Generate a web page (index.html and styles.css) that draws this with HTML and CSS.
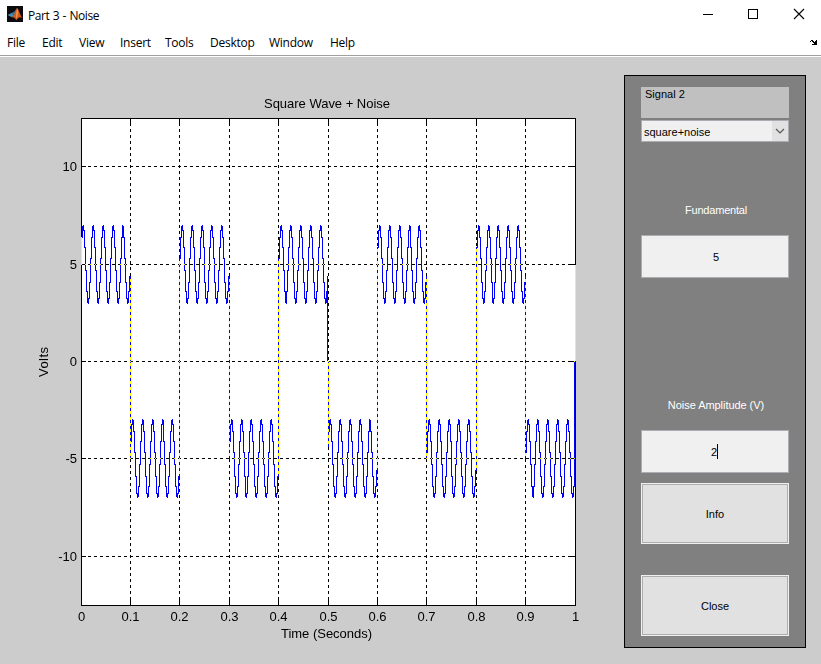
FILE: index.html
```html
<!DOCTYPE html>
<html lang="en">
<head>
<meta charset="utf-8">
<title>Part 3 - Noise</title>
<link rel="stylesheet" href="styles.css">
</head>
<body>
<header class="titlebar">
  <svg class="logo" width="16" height="16" viewBox="0 0 16 16">
    <rect width="16" height="16" fill="#0b0b10"/>
    <path d="M0.5 9 L5 6.8 L7.5 9 L4.8 11.2Z" fill="#3f8fb5"/>
    <path d="M5 6.8 L7.5 5.5 L10 2 L9 7 L7 9Z" fill="#4a6f94"/>
    <path d="M10 1.8 C11.5 3 12.8 8.5 15.5 12.3 C13 10.3 11.5 11.3 9.2 14.2 C8.3 12 7.2 11 5 11.2 C8 9 8.7 4.5 10 1.8Z" fill="#d9581c"/>
    <path d="M10.3 2.6 C11.2 5 10.8 9.5 9.4 13.4 C9.3 10 9 7 10.3 2.6Z" fill="#f5ae58"/>
  </svg>
  <span class="title">Part 3 - Noise</span>
  <div class="controls">
    <svg width="12" height="12" viewBox="0 0 12 12"><path d="M0 6.5H10"/></svg>
    <svg width="12" height="12" viewBox="0 0 12 12"><rect x="0.5" y="1.5" width="9" height="9"/></svg>
    <svg width="12" height="12" viewBox="0 0 12 12"><path class="smooth" d="M1 1L11 11M11 1L1 11"/></svg>
  </div>
</header>
<nav class="menubar">
  <span class="m-file">File</span><span class="m-edit">Edit</span><span class="m-view">View</span><span class="m-insert">Insert</span><span class="m-tools">Tools</span><span class="m-desktop">Desktop</span><span class="m-window">Window</span><span class="m-help">Help</span>
  <svg class="dock" width="7" height="5" viewBox="0 0 7 5" shape-rendering="crispEdges"><path d="M1 0h2v1h1v1h1v-1h1v-1h1v5h-5v-1h2v-1h-1v-1h-1v-1h-1v1h-1v-1h1z"/></svg>
</nav>
<main class="figure">
  <svg class="plot" width="624" height="607" viewBox="0 57 624 607">
    <rect x="81" y="118" width="495" height="488" fill="#fff"/>
    <g id="grid"></g>
    <path id="signal"/>
    <g id="labels"></g>
    <text x="327" y="108" class="caption" textLength="126">Square Wave + Noise</text>
    <text x="326.5" y="638" class="caption" textLength="91">Time (Seconds)</text>
    <text class="caption" transform="translate(48 362) rotate(-90)" textLength="30">Volts</text>
  </svg>
  <aside class="panel">
    <div class="heading">Signal 2</div>
    <div class="select"><span>square+noise</span>
      <i><svg width="10" height="6" viewBox="0 0 10 6"><path d="M1 1L5 5L9 1"/></svg></i></div>
    <label class="first">Fundamental</label>
    <div class="field">5</div>
    <label class="second">Noise Amplitude (V)</label>
    <div class="field focused">2<b></b></div>
    <button class="info">Info</button>
    <button class="close">Close</button>
  </aside>
</main>
<script src="plot.js"></script>
</body>
</html>
```
FILE: styles.css
```css
* { box-sizing: border-box; }
body { margin: 0; width: 821px; height: 664px; overflow: hidden; background: #ccc; color: #000; font: 11px "Liberation Sans", Arial, sans-serif; }
.titlebar { height: 30px; display: flex; align-items: center; padding: 0 16px 2px 7px; background: #fff; font: 12px "Open Sans", sans-serif; }
.title { margin-left: 5px; letter-spacing: -0.45px; word-spacing: 0.8px; padding-top: 2px; }
.controls { margin-left: auto; display: flex; gap: 33px; }
.controls path, .controls rect { fill: none; stroke: #000; shape-rendering: crispEdges; }
.controls .smooth { shape-rendering: auto; stroke-width: 1.1; }
.menubar { height: 27px; display: flex; align-items: center; padding: 0 4px 2px 7px; background: #fff; border-bottom: 1px solid #fff; box-shadow: inset 0 -1px #a0a0a0; font: 12px "Open Sans", sans-serif; letter-spacing: -0.25px; }
.m-file { width: 35px; }
.m-edit { width: 37px; }
.m-view { width: 41px; }
.m-insert { width: 45px; }
.m-tools { width: 45px; }
.m-desktop { width: 59px; }
.m-window { width: 61px; }
.dock { margin-left: auto; }
.figure { display: flex; height: 607px; }
.plot { display: block; flex: none; isolation: isolate; }
.plot text { font: 13px "Liberation Sans", Arial, sans-serif; }
.plot .caption { text-anchor: middle; }
.axis, .gridline { fill: none; stroke: #000; shape-rendering: crispEdges; }
.gridline { stroke-dasharray: 3 3; }
#signal { fill: #ff0; mix-blend-mode: difference; shape-rendering: crispEdges; }
.panel { width: 182px; height: 573px; margin-top: 18px; padding: 11px 16px 0; background: #808080; border: 1px solid #000; display: flex; flex-direction: column; }
.panel > * { flex: none; }
.heading { height: 31px; background: #c0c0c0; padding: 1px 4px; }
.select { height: 22px; margin-top: 2px; border: 1px solid #abadb3; background: #f0f0f0; display: flex; align-items: center; padding-left: 2px; }
.select span { padding-top: 2px; }
.select i { margin-left: auto; width: 16px; height: 20px; background: #e1e1e1; display: flex; align-items: center; justify-content: center; }
.select path { fill: none; stroke: #555; stroke-width: 1.2; }
label { text-align: center; color: #fff; line-height: 13px; }
.first { margin-top: 62px; padding-left: 2px; letter-spacing: -0.2px; }
.second { margin-top: 121px; padding-left: 2px; letter-spacing: -0.05px; }
.field { height: 43px; margin-top: 18px; border: 1px solid #abadb3; background: #f0f0f0; display: flex; align-items: center; justify-content: center; padding-left: 2px; }
.focused { padding: 0 1px 0 0; }
.focused b { width: 1px; height: 15px; background: #000; }
button { height: 61px; padding: 0; border: 1px solid #f0f0f0; box-shadow: inset 0 0 0 1px #adadad; background: #e1e1e1; border-radius: 0; color: #000; font: inherit; }
.info { margin-top: 10px; }
.close { margin-top: 31px; }
```
FILE: plot.js
```js
const xs = [81, 130, 179, 229, 278, 328, 377, 426, 476, 525, 575];
const ys = { 10: 166, 5: 264, 0: 361, "-5": 458, "-10": 556 };
let grid = "", ticks = "M81.5 118.5H575.5V605.5H81.5Z", labels = "";
xs.forEach((x, i) => {
  if (i > 0 && i < 10) {
    grid += `M${x + .5} 606V118`;
    ticks += `M${x + .5} 118v7M${x + .5} 605v-8`;
  }
  labels += `<text x="${x + .5}" y="621" text-anchor="middle">${i / 10}</text>`;
});
for (const [v, y] of Object.entries(ys)) {
  grid += `M82 ${y + .5}H575`;
  ticks += `M82 ${y + .5}h4M575 ${y + .5}h-7`;
  labels += `<text x="77" y="${y + 5}" text-anchor="end">${v}</text>`;
}
document.getElementById("grid").innerHTML = `<path class="gridline" d="${grid}"/><path class="axis" d="${ticks}"/>`;
document.getElementById("labels").innerHTML = labels;

// Square wave plus 50 Hz sine, rasterised into one vertical span per column
const cols = {};
const mark = (x, y) => {
  const c = cols[x] || (cols[x] = [y, y]);
  c[0] = Math.min(c[0], y);
  c[1] = Math.max(c[1], y);
};
let px = 81, py = 264;
for (let k = 1; k < 1000; k++) {
  if (k === 500) {
    mark(327, 360);
    px = 328; py = 361;
    mark(px, py);
    continue;
  }
  const t = k / 1000;
  const v = (Math.floor(k / 100) % 2 ? -5 : 5) + 2 * Math.sin(2 * Math.PI * 50 * t);
  const x = Math.floor(81 + 494 * t), y = Math.round(361 - v * 19.45);
  const far = Math.abs(y - py) > 60;
  if (far) {
    mark(x, py);
    mark(x, y);
  } else {
    const mid = Math.round((py + y) / 2);
    mark(px, py);
    mark(px, x === px ? y : mid);
    mark(x, x === px ? py : mid);
    mark(x, y);
  }
  px = x; py = y;
}
mark(574, 361);
cols[575] = [265, 360];
document.getElementById("signal").setAttribute("d",
  Object.entries(cols).map(([x, [a, b]]) => `M${x} ${a}h1V${b + 1}h-1z`).join(""));
```
